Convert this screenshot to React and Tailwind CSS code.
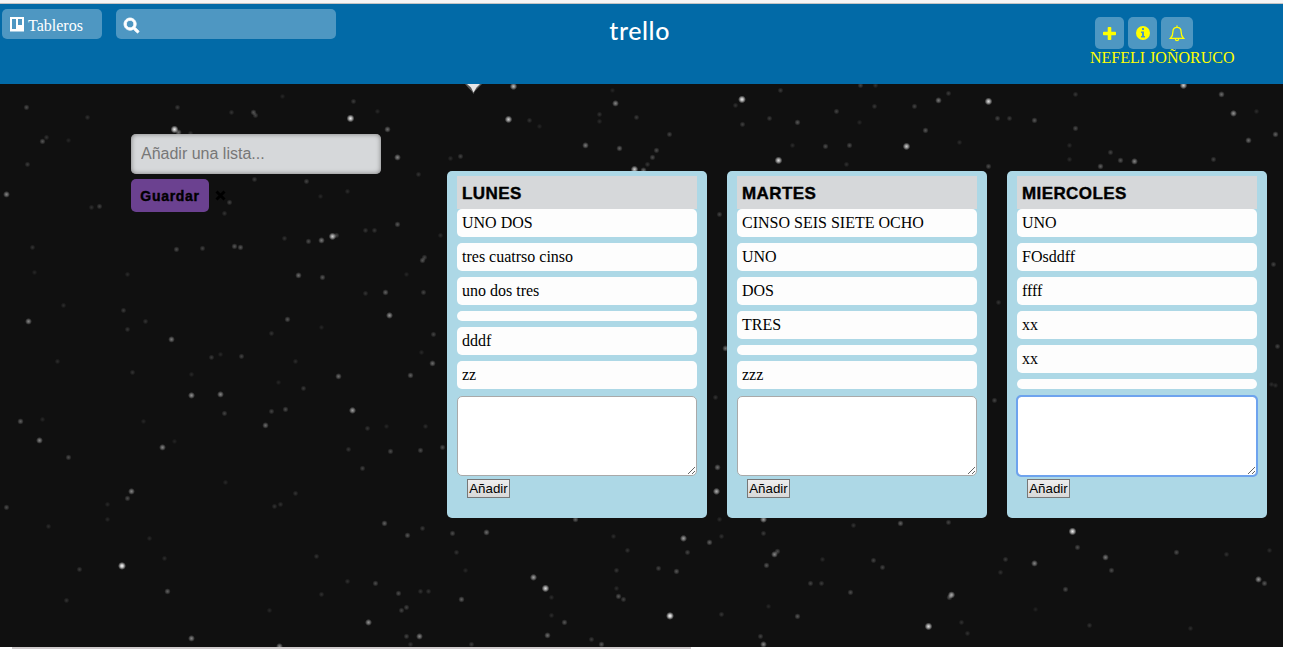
import { FaSearch } from "react-icons/fa";

const lists = [
  { title: "LUNES", cards: ["UNO DOS", "tres cuatrso cinso", "uno dos tres", "", "dddf", "zz"] },
  { title: "MARTES", cards: ["CINSO SEIS SIETE OCHO", "UNO", "DOS", "TRES", "", "zzz"] },
  { title: "MIERCOLES", cards: ["UNO", "FOsddff", "ffff", "xx", "xx", ""], active: true },
];

// Each star: x, y (inside the board), brightness.
const stars = [
  [26, 23, 0.35], [87, 33, 0.18], [177, 23, 0.25], [231, 28, 0.2], [253, 28, 0.4], [255, 31, 0.3],
  [282, 12, 0.1], [353, 17, 0.25], [377, 27, 0.12], [350, 34, 0.95], [387, 45, 0.5], [174, 45, 0.95],
  [178, 48, 0.5], [190, 49, 0.18], [42, 57, 0.4], [46, 53, 0.2], [68, 56, 0.1], [27, 80, 0.25],
  [6, 110, 0.6], [91, 123, 0.18], [99, 122, 0.3], [397, 73, 0.6], [418, 90, 0.2], [254, 95, 0.25],
  [306, 97, 0.3], [229, 118, 0.3], [224, 129, 0.2], [347, 107, 0.15], [320, 112, 0.12],
  [397, 140, 0.4], [365, 146, 0.22], [374, 146, 0.22], [332, 152, 0.85], [336, 151, 0.3],
  [321, 156, 0.55], [308, 157, 0.35], [284, 154, 0.2], [234, 162, 0.4], [240, 163, 0.4],
  [202, 164, 0.3], [176, 165, 0.35], [32, 163, 0.2], [34, 188, 0.1], [127, 190, 0.14],
  [424, 173, 0.3], [422, 176, 0.4], [298, 191, 0.5], [322, 193, 0.4], [406, 190, 0.1],
  [365, 209, 0.2], [385, 208, 0.45], [423, 208, 0.3], [389, 231, 0.65], [63, 221, 0.15],
  [123, 226, 0.25], [145, 237, 0.2], [28, 237, 0.6], [127, 245, 0.22], [171, 255, 0.55],
  [287, 235, 0.4], [271, 249, 0.2], [321, 243, 0.1], [433, 250, 0.3], [421, 268, 0.12],
  [211, 273, 0.25], [220, 270, 0.12], [241, 272, 0.3], [57, 277, 0.15], [295, 277, 0.15],
  [432, 279, 0.5], [132, 288, 0.2], [191, 290, 0.12], [338, 292, 0.5], [410, 291, 0.45],
  [278, 298, 0.1], [303, 304, 0.25], [191, 311, 0.65], [220, 310, 0.6], [224, 329, 0.3],
  [271, 327, 0.3], [285, 325, 0.35], [352, 326, 0.7], [265, 341, 0.5], [20, 337, 0.45],
  [42, 335, 0.12], [143, 337, 0.1], [39, 356, 0.6], [68, 373, 0.35], [162, 363, 0.6],
  [174, 357, 0.08], [367, 344, 0.22], [386, 342, 0.1], [425, 342, 0.15], [348, 365, 0.22],
  [390, 367, 0.35], [420, 366, 0.35], [362, 384, 0.3], [131, 407, 0.6], [127, 414, 0.35],
  [225, 398, 0.12], [295, 409, 0.2], [274, 422, 0.2], [280, 420, 0.18], [107, 420, 0.12],
  [6, 423, 0.35], [107, 435, 0.12], [48, 442, 0.15], [149, 454, 0.12], [384, 439, 0.45],
  [407, 451, 0.4], [422, 444, 0.25], [164, 474, 0.15], [121.500, 481.500, 1], [79, 485, 0.25],
  [316, 472, 0.2], [167, 507, 0.45], [66, 516, 0.2], [347, 497, 0.18], [321, 510, 0.18],
  [375, 499, 0.35], [398, 509, 0.35], [420, 507, 0.2], [428, 507, 0.2], [401, 526, 0.3],
  [406, 523, 0.3], [269, 526, 0.12], [368, 538, 0.65], [191, 554, 0.6], [419, 552, 0.6],
  [406, 552, 0.3], [279, 562, 0.6], [410, 560, 0.2],
  [575, 435, 0.45], [452, 449, 0.35], [486, 448, 0.5], [456, 468, 0.2], [465, 486, 0.12],
  [533, 493, 0.7], [545, 504, 0.9], [551, 513, 0.15], [461, 515, 0.45], [551, 531, 0.15],
  [564, 538, 0.4], [547, 551, 0.5], [471, 560, 0.25], [591, 555, 0.25], [601, 560, 0.4],
  [613, 452, 0.15], [627, 466, 0.2], [616, 486, 0.22], [616, 504, 0.15], [618, 512, 0.4],
  [623, 515, 0.3], [658, 484, 0.3], [676, 487, 0.4], [683, 454, 0.7], [687, 468, 0.3],
  [709, 458, 0.45], [721, 452, 0.18], [719, 435, 0.15], [669.500, 531.500, 1], [721, 530, 0.22],
  [763, 435, 0.7], [763, 449, 0.25], [774, 470, 0.6], [777, 467, 0.35], [766, 481, 0.4],
  [810, 499, 0.3], [821, 499, 0.25], [822, 475, 0.15], [797, 532, 0.4], [768, 522, 0.12],
  [760, 552, 0.3], [763, 560, 0.6], [850, 508, 0.35], [853, 441, 0.2],
  [900, 439, 0.45], [948, 438, 0.3], [873, 476, 0.3], [882, 483, 0.3], [951, 510.500, 0.75],
  [949, 513, 0.4], [928, 542, 0.9], [961, 538, 0.18], [967, 549, 0.18], [1000, 488, 0.18],
  [1005, 475, 0.25], [1034, 479, 0.6], [1072, 447, 0.95], [1077, 463, 0.35], [1105, 473, 0.55],
  [1111, 486, 0.35], [1065, 505, 0.35], [1035, 525, 0.08], [1089, 541, 0.2], [1176, 468, 0.35],
  [1226, 470, 0.18], [1269, 466, 0.15], [1258, 495, 0.65], [1264, 499, 0.4], [1190, 544, 0.15],
  [442, 363, 0.35], [717, 383, 0.5], [716, 407, 0.75], [725, 264, 0.5],
  [715, 313, 0.2], [994, 316, 0.3], [1277, 262, 0.3], [1275, 301, 0.15], [1271, 300, 0.15],
  [998, 218, 0.2], [719, 130, 0.3], [1273, 180, 0.3], [440, 151, 0.15],
  [513, 2, 0.8], [612, 6, 0.1], [615, 19, 0.6], [508, 35, 0.85], [529, 36, 0.2], [539, 42, 0.1],
  [599, 30, 0.2], [599, 37, 0.14], [636, 33, 0.25], [669, 50, 0.3], [585, 61, 0.55],
  [619, 64, 0.45], [656, 66, 0.35], [652, 73, 0.35], [647, 80, 0.22], [634, 85, 0.85],
  [643, 86, 0.5], [460, 72, 0.3], [450, 74, 0.15], [741.500, 15, 0.95], [735, 21, 0.2],
  [780, 6, 0.25], [769, 34, 0.25], [742, 40, 0.28], [797, 38, 0.4], [836, 27, 0.3],
  [860, 1, 0.3], [875, 1, 0.18], [874, 22, 0.22], [914, 22, 0.3], [938, 16, 0.55],
  [948, 9, 0.25], [859, 38, 0.12], [925, 46, 0.4], [906, 62, 0.85], [849, 61, 0.35],
  [825, 62, 0.35], [792, 61, 0.15], [778, 76, 0.9], [846, 80, 0.18], [959, 58, 0.15],
  [988, 17, 0.9], [997, 34, 0.3], [1009, 34, 0.25], [1034, 36, 0.4], [1075, 10, 0.22],
  [1075, 44, 0.35], [1183, 1, 0.85], [1221, 10, 0.5], [1233, 29, 0.65], [1256, 27, 0.15],
  [1275, 50, 0.45], [1248, 56, 0.5], [1069, 61, 0.15], [1069, 75, 0.15], [988, 82, 0.35],
  [1100, 82, 0.45], [1110, 68, 0.3], [1120, 76, 0.4], [1134, 77, 0.6], [1213, 75, 0.3],
];

function Starfield() {
  return (
    <svg className="absolute inset-0 -z-10" width="1283" height="563" aria-hidden="true">
      <defs>
        <radialGradient id="glow">
          <stop offset="0" stopColor="#fff" />
          <stop offset="0.4" stopColor="#fff" stopOpacity="0.7" />
          <stop offset="1" stopColor="#fff" stopOpacity="0" />
        </radialGradient>
      </defs>
      {stars.map(([x, y, b], i) => (
        <circle key={i} cx={x + 0.5} cy={y + 0.4} r={2.6 + b * 1.4} fill="url(#glow)" opacity={Math.min(1, 0.05 + b * b * 0.6 + b * 0.35)} />
      ))}
      <path d="M465 0h17l-4 4-3 3-1.500 3-2-3-3-3z" fill="#fff" opacity="0.3" />
      <path d="M467 0h13l-3.500 3.500-3 5-2.500-5z" fill="#fff" opacity="0.85" />
    </svg>
  );
}

function BoardIcon() {
  return (
    <svg className="-mt-1" width="14" height="15" viewBox="0 0 14 15" aria-hidden="true">
      <path fill="#fff" fillRule="evenodd" d="M0 0h14v14.500H0zM2 2v10h4V2zM8 2v6h4V2z" />
    </svg>
  );
}

function PlusIcon() {
  return (
    <svg width="13" height="13" viewBox="0 0 13 13" aria-hidden="true">
      <path fill="#ff0" d="M5.500 0h2a.8.8 0 0 1 .8.8v3.900h3.900a.8.8 0 0 1 .8.8v2a.8.8 0 0 1-.8.8H8.300v3.900a.8.8 0 0 1-.8.8h-2a.8.8 0 0 1-.8-.8V8.300H.8A.8.8 0 0 1 0 7.500v-2a.8.8 0 0 1 .8-.8h3.900V.8a.8.8 0 0 1 .8-.8z" />
    </svg>
  );
}

function InfoIcon() {
  return (
    <svg width="14" height="14" viewBox="0 0 14 14" aria-hidden="true">
      <path fill="#ff0" fillRule="evenodd" d="M7 0a7 7 0 1 0 0 14A7 7 0 0 0 7 0zM6 2h2v2H6zM5 5.500h3V10h1v1.500H5V10h1V7H5z" />
    </svg>
  );
}

function BellIcon() {
  return (
    <svg width="16" height="17" viewBox="0 0 16 17" fill="none" stroke="#ff0" strokeWidth="1.300" aria-hidden="true">
      <path d="M8 .5v1.700M1.500 13.300C3.400 11.500 3.900 9.500 3.900 6.800 3.900 4 5.300 2.400 8 2.400s4.100 1.600 4.100 4.400c0 2.700.5 4.700 2.400 6.500zM6.300 13.700c.1 1.300.7 2 1.700 2s1.600-.7 1.700-2" />
    </svg>
  );
}

function Header() {
  return (
    <header className="grid h-20 w-[1283px] grid-cols-[336px_1fr_193px] bg-[#026aa7]">
      <div className="flex gap-3.5 pt-[5px] pl-0.5">
        <button className="flex h-[30px] w-[100px] items-center gap-1 rounded-[5px] bg-[#4e97c2] pt-1 pl-2 text-[16px] leading-none text-white">
          <BoardIcon />
          <span>Tableros</span>
        </button>
        <div className="flex h-[30px] w-[220px] items-center rounded-[5px] bg-[#4e97c2] pt-0.5 pl-2 text-white">
          <FaSearch size={15} className="overflow-visible stroke-white stroke-[28px]" />
        </div>
      </div>
      <h1 className="pt-2.5 pr-[148px] text-right font-['Lato','Open_Sans',sans-serif] text-[25px] leading-8 font-medium tracking-[0.6px] text-white">
        <span className="mr-[272px]">trello</span>
      </h1>
      <div className="pt-[13px] text-[#ff0]">
        <div className="flex gap-1 pl-[5px]">
          <button className="flex h-8 w-[29px] items-center justify-center rounded-[5px] bg-[#4e97c2]"><PlusIcon /></button>
          <button className="flex h-8 w-[29px] items-center justify-center rounded-[5px] bg-[#4e97c2]"><InfoIcon /></button>
          <button className="flex h-8 w-8 items-center justify-center rounded-[5px] bg-[#4e97c2]"><BellIcon /></button>
        </div>
        <p className="text-[16px] leading-[18px] whitespace-nowrap">NEFELI JOÑORUCO</p>
      </div>
    </header>
  );
}

function AddList() {
  return (
    <form className="mt-[50px] ml-[131px] w-[250px] font-['Liberation_Sans',Arial,sans-serif]">
      <input
        className="block h-10 w-full rounded-[5px] bg-[#d6d8da] px-2.5 text-[16px] shadow-[inset_0_0_5px_#777] placeholder:text-[#777]"
        placeholder="Añadir una lista..."
      />
      <div className="mt-[5px] flex items-center">
        <button type="button" className="h-[33px] w-[78px] rounded-[5px] bg-[#6b4190] pt-0.5 text-[14px] font-bold tracking-[0.7px] text-black [-webkit-text-stroke:0.4px_black]">Guardar</button>
        <svg className="ml-1.5" width="11" height="11" viewBox="0 0 11 11" aria-hidden="true">
          <path d="M1.500 1.500l8 8M9.500 1.500l-8 8" stroke="#000" strokeWidth="3" />
        </svg>
      </div>
    </form>
  );
}

function List({ title, cards, active }) {
  return (
    <section className="h-[347px] w-[260px] rounded-[5px] bg-[#add8e6] px-2.5 pt-[5px]">
      <h2 className="h-[33px] bg-[#d6d8da] pl-[5px] font-['Liberation_Sans',Arial,sans-serif] text-[17px] leading-[35px] font-bold tracking-[0.400px] [-webkit-text-stroke:0.4px_black]">{title}</h2>
      <ul className="flex flex-col gap-1.5">
        {cards.map((text, i) => (
          <li key={i} className="rounded-[5px] bg-[#fdfdfd] p-[5px] text-[16px] leading-[18px]">{text}</li>
        ))}
      </ul>
      <textarea
        className={
          active
            ? "mt-[7px] block h-20 w-full resize rounded-[4px] border border-[#7b9bd0] bg-white outline-2 -outline-offset-1 outline-[#6ea3ee]"
            : "mt-[7px] block h-20 w-full resize rounded-[5px] border border-[#a9a9a9] bg-white"
        }
      />
      <button className="mt-[3px] ml-2.5 block h-[19px] w-[43px] border border-[#777] bg-linear-to-b from-[#eee] to-[#d8d8d8] font-['Liberation_Sans',Arial,sans-serif] text-[13.333px] leading-[17px]">Añadir</button>
    </section>
  );
}

export default function App() {
  return (
    <div className="h-[656px] w-[1292px] overflow-hidden bg-white font-['Liberation_Serif','Times_New_Roman',serif] text-black">
      <div className="h-1 w-[1283px] border-b border-[#c4c4c4] bg-[#f5f5f5]" />
      <Header />
      <main className="relative isolate flex h-[563px] w-[1283px] items-start bg-[#101010]">
        <Starfield />
        <AddList />
        <div className="mt-[87px] ml-[66px] flex gap-5">
          {lists.map((list) => (
            <List key={list.title} {...list} />
          ))}
        </div>
      </main>
      <div className="ml-3 h-0.5 w-[679px] bg-[#cfcbcc]" />
    </div>
  );
}
